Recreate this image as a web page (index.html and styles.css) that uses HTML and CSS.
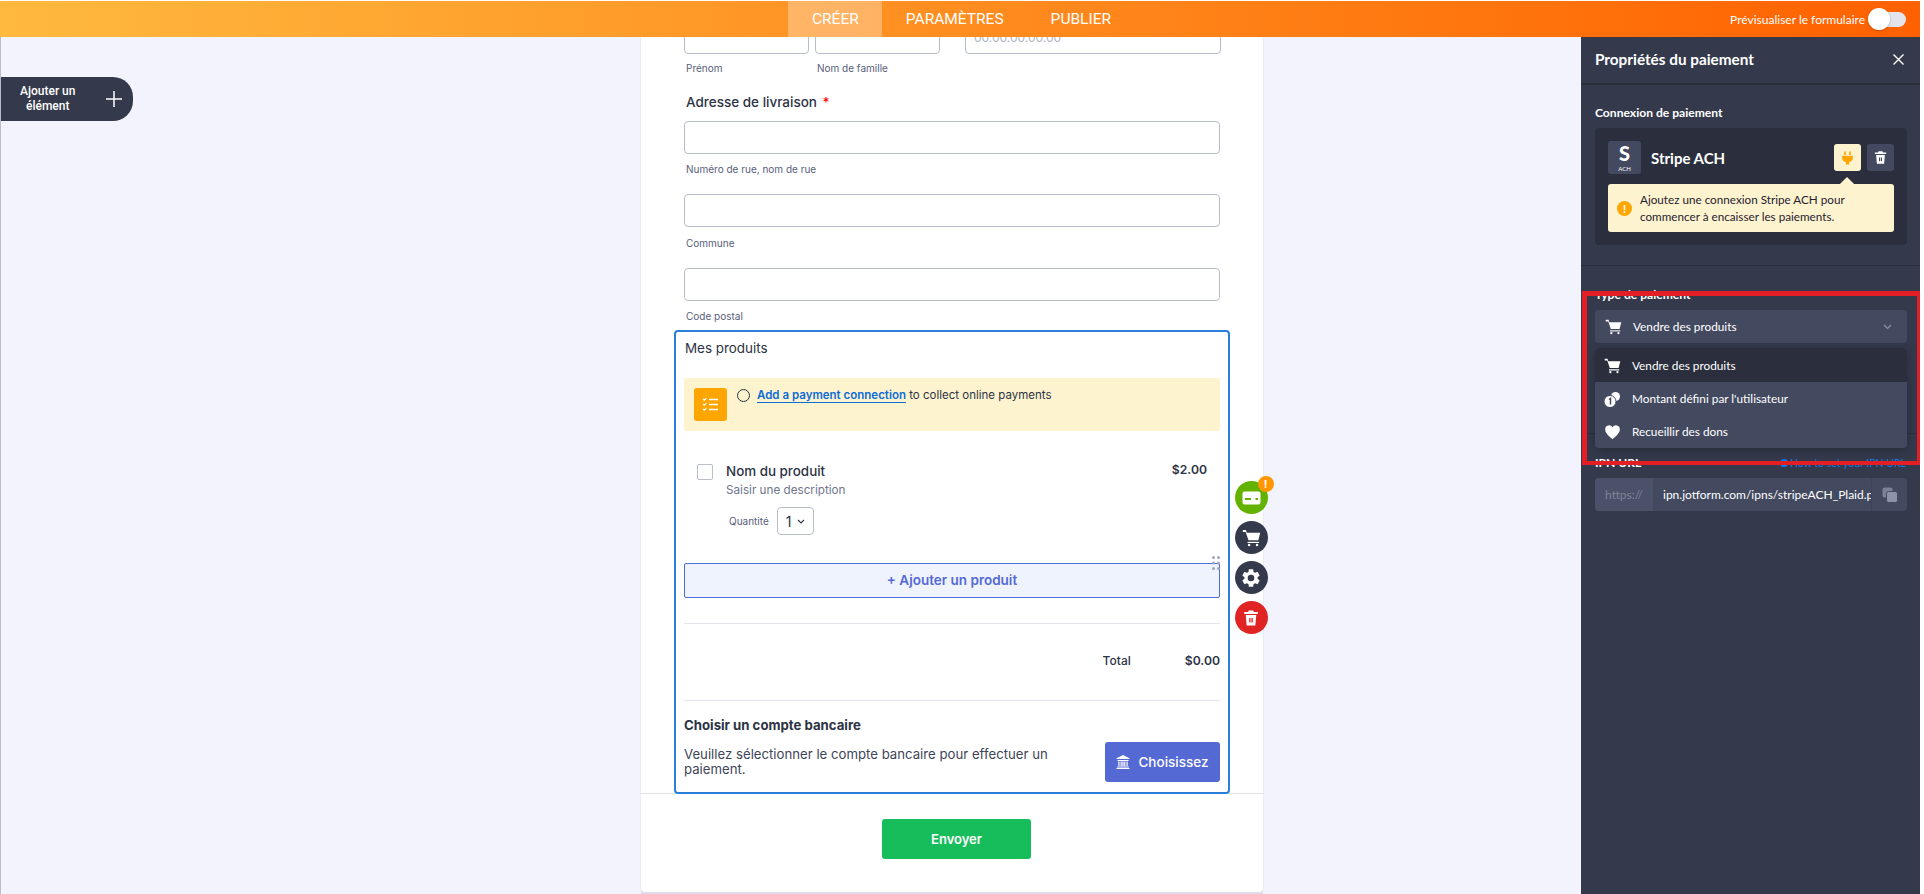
FILE: index.html
```html
<!DOCTYPE html>
<html lang="fr">

<head>
    <title>Propriétés du paiement</title>
    <meta charset="UTF-8">
    <link rel="stylesheet" href="styles.css">
</head>

<body>
    <svg class="sprite" width="0" height="0">
        <symbol id="i-cart" viewBox="0 0 24 24">
            <path d="M1 2.5h4l1 3.5h17l-2.4 9.5H8.2L4.6 5H1z" fill="currentColor" />
            <path d="M7 18.2h14.5" stroke="currentColor" stroke-width="1.5" fill="none" />
            <circle cx="9" cy="21.5" r="1.6" fill="currentColor" />
            <circle cx="19" cy="21.5" r="1.6" fill="currentColor" />
        </symbol>
        <symbol id="i-trash" viewBox="0 0 24 24">
            <path fill-rule="evenodd" fill="currentColor" d="M9 2h6l1 2h5v2.5H3V4h5zM5 8h14l-1.2 14H6.2zM9.6 12v6h1.8v-6zM12.6 12v6h1.8v-6z" />
        </symbol>
    </svg>

    <header class="topbar">
        <div></div>
        <nav class="tabs">
            <a class="tab active" href="#">CRÉER</a>
            <a class="tab" href="#">PARAMÈTRES</a>
            <a class="tab" href="#">PUBLIER</a>
        </nav>
        <div class="preview">
            <span>Prévisualiser le formulaire</span>
            <span class="toggle"><span class="knob"></span></span>
        </div>
    </header>

    <div class="main">
        <div class="canvas">
            <button class="add-element">
                <span>Ajouter un<br>élément</span>
                <svg width="16" height="16" viewBox="0 0 16 16"><path d="M8 0v16M0 8h16" stroke="#fff" stroke-width="1.5" /></svg>
            </button>

            <div class="form">
                <div class="name-row">
                    <div class="name-col">
                        <div class="input"></div>
                        <div class="sublabel">Prénom</div>
                    </div>
                    <div class="name-col">
                        <div class="input"></div>
                        <div class="sublabel">Nom de famille</div>
                    </div>
                    <div class="phone-col">
                        <div class="input phone">00.00.00.00.00</div>
                    </div>
                </div>

                <div class="field-label">Adresse de livraison <span class="star">*</span></div>
                <div class="input addr-first"></div>
                <div class="sublabel">Numéro de rue, nom de rue</div>
                <div class="input addr-second"></div>
                <div class="sublabel commune">Commune</div>
                <div class="input addr-third"></div>
                <div class="sublabel">Code postal</div>

                <div class="product-box">
                    <div class="box-title">Mes produits</div>

                    <div class="notice">
                        <div class="notice-icon">
                            <svg width="17" height="17" viewBox="0 0 17 17" fill="none" stroke="#fff">
                                <path d="M7 3.5h9M7 8.5h9M7 13.5h9" stroke-width="1.6" />
                                <path d="M1 3l1.2 1.2L4.5 2M1 8l1.2 1.2L4.5 7M1 13l1.2 1.2L4.5 12" stroke-width="1.2" />
                            </svg>
                        </div>
                        <span class="notice-ring"></span>
                        <div class="notice-text"><a href="#">Add a payment connection</a> to collect online payments</div>
                    </div>

                    <div class="product">
                        <span class="checkbox"></span>
                        <div class="product-info">
                            <div class="product-name">Nom du produit</div>
                            <div class="product-desc">Saisir une description</div>
                            <div class="qty">
                                <span>Quantité</span>
                                <div class="qty-select">1
                                    <svg width="8" height="5" viewBox="0 0 8 5" fill="none"><path d="M1 1l3 3 3-3" stroke="#343a4c" stroke-width="1.2" /></svg>
                                </div>
                            </div>
                        </div>
                        <div class="price">$2.00</div>
                    </div>

                    <div class="add-product">+ Ajouter un produit
                        <svg class="drag" width="8" height="14" viewBox="0 0 8 14" fill="#9ea4bc">
                            <circle cx="1.5" cy="1.5" r="1.5" /><circle cx="6.5" cy="1.5" r="1.5" />
                            <circle cx="1.5" cy="7" r="1.5" /><circle cx="6.5" cy="7" r="1.5" />
                            <circle cx="1.5" cy="12.5" r="1.5" /><circle cx="6.5" cy="12.5" r="1.5" />
                        </svg>
                    </div>

                    <hr class="rule first">
                    <div class="total">
                        <span>Total</span>
                        <strong>$0.00</strong>
                    </div>
                    <hr class="rule second">

                    <div class="bank-title">Choisir un compte bancaire</div>
                    <div class="bank-row">
                        <p>Veuillez sélectionner le compte bancaire pour effectuer un paiement.</p>
                        <button class="bank-btn">
                            <svg width="14" height="14" viewBox="0 0 14 14" fill="#fff">
                                <path d="M7 0l6.5 3.2V4H.5v-.8zM1.5 5h11v1h-11zM2.3 6.6h1.2v4.4H2.3zM4.6 6.6h1.2v4.4H4.6zM8.2 6.6h1.2v4.4H8.2zM10.5 6.6h1.2v4.4h-1.2zM6.4 6.6h1.2v4.4H6.4zM1.2 11.6h11.6v1H1.2zM.5 13h13v1H.5z" />
                            </svg>
                            Choisissez
                        </button>
                    </div>

                    <div class="actions">
                        <div class="action green">
                            <svg width="19" height="14" viewBox="0 0 19 14">
                                <rect x="0.5" y="0.5" width="18" height="13" rx="2" fill="#fff" />
                                <rect x="3" y="7" width="6" height="2" fill="#63b200" />
                                <rect x="13.5" y="7" width="2.5" height="2" fill="#63b200" />
                            </svg>
                            <span class="badge">!</span>
                        </div>
                        <div class="action dark">
                            <svg width="19" height="19"><use href="#i-cart" /></svg>
                        </div>
                        <div class="action dark">
                            <svg width="22" height="22" viewBox="0 0 24 24" fill="#fff">
                                <path d="M19.14 12.94c.04-.3.06-.61.06-.94 0-.32-.02-.64-.07-.94l2.03-1.58a.49.49 0 0 0 .12-.61l-1.92-3.32a.488.488 0 0 0-.59-.22l-2.39.96c-.5-.38-1.03-.7-1.62-.94l-.36-2.54a.484.484 0 0 0-.48-.41h-3.84c-.24 0-.43.17-.47.41l-.36 2.54c-.59.24-1.13.57-1.62.94l-2.39-.96c-.22-.08-.47 0-.59.22L2.74 8.87c-.12.21-.08.47.12.61l2.03 1.58c-.05.3-.09.63-.09.94s.02.64.07.94l-2.03 1.58a.49.49 0 0 0-.12.61l1.92 3.32c.12.22.37.29.59.22l2.39-.96c.5.38 1.03.7 1.62.94l.36 2.54c.05.24.24.41.48.41h3.84c.24 0 .44-.17.47-.41l.36-2.54c.59-.24 1.13-.56 1.62-.94l2.39.96c.22.08.47 0 .59-.22l1.92-3.32c.12-.22.07-.47-.12-.61l-2.01-1.58zM12 15.6A3.6 3.6 0 1 1 12 8.4a3.6 3.6 0 0 1 0 7.2z" />
                            </svg>
                        </div>
                        <div class="action red">
                            <svg width="18" height="18"><use href="#i-trash" /></svg>
                        </div>
                    </div>
                </div>

                <div class="form-footer">
                    <button class="submit">Envoyer</button>
                </div>
            </div>
        </div>

        <aside class="panel">
            <div class="panel-head">
                <span>Propriétés du paiement</span>
                <svg width="11" height="11" viewBox="0 0 11 11"><path d="M.5.5l10 10M10.5.5l-10 10" stroke="#fff" stroke-width="1.4" /></svg>
            </div>

            <section class="panel-section connection">
                <div class="panel-label">Connexion de paiement</div>
                <div class="conn-card">
                    <div class="conn-head">
                        <div class="conn-logo"><b>S</b><i>ACH</i></div>
                        <div class="conn-name">Stripe ACH</div>
                        <div class="conn-btn plug">
                            <svg width="13" height="14" viewBox="0 0 24 24" fill="#ffa500" preserveAspectRatio="none">
                                <path d="M6 1h3v6H6zM15 1h3v6h-3zM2 8h20v4c0 4-4 6.500-7 7v4H9v-4c-3-.5-7-3-7-7z" />
                            </svg>
                        </div>
                        <div class="conn-btn trash">
                            <svg width="15" height="15"><use href="#i-trash" /></svg>
                        </div>
                    </div>
                    <div class="conn-tip">
                        <span class="warn">!</span>
                        <span>Ajoutez une connexion Stripe ACH pour commencer à encaisser les paiements.</span>
                    </div>
                </div>
            </section>

            <section class="panel-section type">
                <div class="panel-label">Type de paiement</div>
                <div class="select">
                    <svg width="17" height="17"><use href="#i-cart" /></svg>
                    <span>Vendre des produits</span>
                    <svg class="chev" width="9" height="6" viewBox="0 0 9 6" fill="none"><path d="M1 1l3.500 3.500L8 1" stroke="#8b91a6" stroke-width="1.2" /></svg>
                </div>
                <ul class="menu">
                    <li class="selected">
                        <svg width="17" height="17"><use href="#i-cart" /></svg>
                        Vendre des produits
                    </li>
                    <li>
                        <svg width="17" height="16" viewBox="0 0 16 16" fill="#fff">
                            <circle cx="11" cy="5.500" r="4.500" />
                            <circle cx="5.500" cy="10.500" r="6" stroke="#434a60" stroke-width="1" />
                            <path d="M4.500 8.500l1.500-1v6" stroke="#434a60" stroke-width="1.500" fill="none" />
                        </svg>
                        Montant défini par l'utilisateur
                    </li>
                    <li>
                        <svg width="17" height="16" viewBox="0 0 24 24" fill="#fff">
                            <path d="M12 23C5 17 1 13 1 8a6 6 0 0 1 11-3.200A6 6 0 0 1 23 8c0 5-4 9-11 15z" />
                        </svg>
                        Recueillir des dons
                    </li>
                </ul>
            </section>

            <section class="panel-section ipn">
                <div class="ipn-head">
                    <div class="panel-label">IPN URL</div>
                    <a href="#"><span class="info-dot"></span>How to set your IPN URL</a>
                </div>
                <div class="ipn-input">
                    <span class="prefix">https://</span>
                    <span class="ipn-value">ipn.jotform.com/ipns/stripeACH_Plaid.php</span>
                    <span class="copy">
                        <svg width="16" height="16" viewBox="0 0 16 16">
                            <rect x="0.500" y="0.500" width="10" height="10" rx="2" fill="#7b8198" />
                            <rect x="4.500" y="4.500" width="11" height="11" rx="2" fill="#8c92a8" stroke="#434a60" />
                        </svg>
                    </span>
                </div>
            </section>

            <!-- annotation drawn on the screenshot -->
            <div class="highlight"></div>
        </aside>
    </div>
</body>

</html>
```

FILE: styles.css
```css
* {
    box-sizing: border-box;
}

html {
    background-color: #fff;
}

body {
    margin: 0;
    width: 1920px;
    height: 894px;
    overflow: hidden;
    padding-top: 1px;
    background-color: #fff;
    font-family: "Inter", "Liberation Sans", sans-serif;
    color: #2c3345;
}

.sprite {
    position: absolute;
}

button {
    border: none;
    font-family: inherit;
    padding: 0;
}

/* Top bar */
.topbar {
    height: 36px;
    display: grid;
    grid-template-columns: 1fr auto 1fr;
    background: linear-gradient(90deg, #ffb93e 0%, #ff6100 100%);
}

.tabs {
    display: flex;
    margin-left: 3px;
}

.tab {
    display: block;
    padding: 0 23.5px;
    line-height: 36px;
    font-family: "Roboto", sans-serif;
    font-size: 15.5px;
    color: #fff;
    text-decoration: none;
}

.tab.active {
    background-color: rgba(255, 255, 255, 0.3);
}

.preview {
    display: flex;
    align-items: center;
    justify-content: flex-end;
    padding-right: 14px;
    color: #fff;
    font-family: "Lato", sans-serif;
    font-size: 12px;
}

.toggle {
    position: relative;
    display: block;
    width: 38px;
    height: 15px;
    margin-left: 3px;
    border-radius: 8px;
    background-color: #e3e5ec;
}

.knob {
    position: absolute;
    left: 0;
    top: -4px;
    width: 22px;
    height: 22px;
    border-radius: 50%;
    background-color: #fff;
    box-shadow: 0 1px 3px rgba(0, 0, 0, 0.2);
}

/* Builder area */
.main {
    display: flex;
    height: 857px;
}

.canvas {
    flex: 1;
    position: relative;
    overflow: hidden;
    background-color: #f3f3fe;
    border-left: 1px solid #b9bccb;
}

.add-element {
    position: absolute;
    left: -1px;
    top: 40px;
    width: 133px;
    height: 44px;
    display: flex;
    align-items: center;
    padding: 0 11px 0 20px;
    justify-content: space-between;
    background-color: #343a4c;
    color: #fff;
    border-radius: 0 20px 20px 0;
    font-family: "Roboto", sans-serif;
    font-size: 12px;
    font-weight: 500;
    line-height: 15px;
}

/* Form */
.form {
    width: 622px;
    margin: -16px 0 0 640px;
    padding-bottom: 33px;
    background-color: #fff;
    border-radius: 0 0 4px 4px;
    box-shadow: 0 4px 0 #dcdeec, 0 0 0 1px #eaebf7;
}

.name-row {
    display: flex;
    padding-left: 43px;
}

.name-col {
    width: 125px;
    margin-right: 6px;
}

.phone-col {
    width: 256px;
    margin-left: 19px;
}

.input {
    height: 33px;
    width: 536px;
    margin-left: 43px;
    border: 1px solid #b8bdc9;
    border-radius: 4px;
    background-color: #fff;
}

.name-row .input {
    width: 100%;
    margin-left: 0;
}

.phone {
    padding: 0 8px;
    font-size: 12px;
    line-height: 31px;
    color: #b0b4c0;
}

.sublabel {
    margin: 8px 0 0 45px;
    font-size: 10px;
    line-height: 14px;
    color: #57607a;
}

.sublabel.commune {
    margin-top: 9px;
}

.name-row .sublabel {
    margin: 7px 0 0 2px;
}

.field-label {
    margin: 18px 0 0 45px;
    font-size: 13.5px;
    font-weight: 500;
    line-height: 18px;
}

.star {
    margin-left: 2px;
    color: #f00;
}

.addr-first {
    margin-top: 10px;
}

.addr-second {
    margin-top: 18px;
}

.addr-third {
    margin-top: 18px;
}

/* Product box */
.product-box {
    position: relative;
    z-index: 1;
    width: 556px;
    margin: 7px 0 0 33px;
    padding: 7px 8px 10px;
    border: 2px solid #2b7fdc;
    border-radius: 4px;
    background-color: #fff;
}

.box-title {
    margin-left: 1px;
    font-size: 13.4px;
    line-height: 18px;
}

.notice {
    display: flex;
    align-items: flex-start;
    height: 53px;
    margin-top: 21px;
    padding: 10px;
    border-radius: 3px;
    background-color: #fef3cf;
}

.notice-icon {
    width: 33px;
    height: 33px;
    display: flex;
    align-items: center;
    justify-content: center;
    border-radius: 3px;
    background-color: #ffa500;
}

.notice-ring {
    width: 13px;
    height: 13px;
    margin: 1px 7px 0 10px;
    border: 1.5px solid #2c3345;
    border-radius: 50%;
}

.notice-text {
    font-size: 11.5px;
    line-height: 14px;
}

.notice-text a {
    font-weight: 600;
    color: #0a6cd8;
    text-decoration: none;
    border-bottom: 1px solid #0a6cd8;
}

.product {
    display: flex;
    align-items: flex-start;
    margin-top: 31px;
    padding: 0 13px;
}

.checkbox {
    width: 16px;
    height: 16px;
    margin: 2px 13px 0 0;
    border: 1px solid #b8bdc9;
    border-radius: 2px;
}

.product-info {
    flex: 1;
}

.product-name {
    font-size: 13.4px;
    font-weight: 500;
    line-height: 18px;
}

.product-desc {
    margin-top: 2px;
    font-size: 11.7px;
    line-height: 16px;
    color: #6f768d;
}

.qty {
    display: flex;
    align-items: center;
    margin: 9px 0 0 3px;
    font-size: 10px;
    color: #57607a;
}

.qty-select {
    display: flex;
    align-items: center;
    justify-content: space-between;
    width: 37px;
    height: 28px;
    margin-left: 8px;
    padding: 0 8px;
    border: 1px solid #b8bdc9;
    border-radius: 4px;
    font-size: 14px;
    color: #2c3345;
}

.price {
    font-size: 12.2px;
    font-weight: 600;
    line-height: 16px;
}

.add-product {
    position: relative;
    height: 35px;
    margin-top: 28px;
    border: 1px solid #4c6fe0;
    border-radius: 2px;
    background-color: #eff3fe;
    text-align: center;
    font-size: 13.5px;
    font-weight: 600;
    line-height: 33px;
    color: #5469d4;
}

.drag {
    position: absolute;
    right: -1px;
    top: -8px;
}

.rule {
    height: 1px;
    margin: 25px 0 0;
    border: none;
    background-color: #e3e5ec;
}

.rule.second {
    margin-top: 30px;
}

.total {
    display: flex;
    justify-content: flex-end;
    gap: 54px;
    margin-top: 28px;
    font-size: 12px;
    font-weight: 500;
    line-height: 18px;
}

.total strong {
    font-size: 12.2px;
    font-weight: 600;
}

.bank-title {
    margin-top: 15px;
    font-size: 13.2px;
    font-weight: 700;
    line-height: 18px;
}

.bank-row {
    display: flex;
    align-items: center;
    justify-content: space-between;
    margin-top: 8px;
}

.bank-row p {
    width: 385px;
    margin: 0;
    font-size: 13.2px;
    line-height: 15px;
    color: #3e4459;
}

.bank-btn {
    width: 115px;
    height: 40px;
    display: flex;
    align-items: center;
    justify-content: center;
    gap: 8px;
    border-radius: 3px;
    background-color: #5569d4;
    color: #fff;
    font-size: 13.5px;
    font-weight: 500;
}

.form-footer {
    margin-top: -1px;
    padding-top: 25px;
    border-top: 1px solid #e3e5ec;
}

.submit {
    display: block;
    width: 149px;
    height: 40px;
    margin-left: 241px;
    border-radius: 3px;
    background-color: #18bd5b;
    color: #fff;
    font-size: 13px;
    font-weight: 600;
}

/* Round buttons beside the selected field */
.actions {
    position: absolute;
    left: 558.5px;
    top: 149px;
    display: flex;
    flex-direction: column;
    gap: 7px;
}

.action {
    position: relative;
    width: 33px;
    height: 33px;
    display: flex;
    align-items: center;
    justify-content: center;
    border-radius: 50%;
    color: #fff;
}

.action.green {
    background-color: #63b200;
}

.action.dark {
    background-color: #343a4c;
}

.action.red {
    background-color: #e02424;
}

.badge {
    position: absolute;
    right: -6px;
    top: -5px;
    width: 16px;
    height: 16px;
    border-radius: 50%;
    background-color: #ff9800;
    text-align: center;
    font-size: 11px;
    font-weight: 700;
    line-height: 16px;
}

/* Right panel */
.panel {
    position: relative;
    width: 339px;
    background-color: #343a4c;
    color: #fff;
    font-family: "Lato", sans-serif;
}

.panel-head {
    display: flex;
    align-items: center;
    justify-content: space-between;
    height: 48px;
    padding: 0 16px 2px 14px;
    border-bottom: 2px solid #2b2f3d;
    font-size: 15.3px;
    font-weight: 700;
}

.panel-section {
    padding: 20px 13px 0 14px;
    border-bottom: 1px solid #2b2f3d;
}

.panel-label {
    font-size: 12.1px;
    font-weight: 700;
    line-height: 16px;
}

.connection {
    height: 181px;
}

.conn-card {
    margin-top: 7px;
    height: 117px;
    padding: 13px;
    border-radius: 4px;
    background-color: #2b2f3d;
}

.conn-head {
    display: flex;
    align-items: center;
}

.conn-logo {
    width: 33px;
    height: 33px;
    display: flex;
    flex-direction: column;
    align-items: center;
    border-radius: 3px;
    background-color: #434a60;
}

.conn-logo b {
    font-size: 20px;
    font-weight: 900;
    line-height: 23px;
    margin-top: 1px;
}

.conn-logo i {
    font-size: 6px;
    font-style: normal;
    line-height: 7px;
}

.conn-name {
    flex: 1;
    margin-left: 10px;
    font-size: 15px;
    font-weight: 700;
}

.conn-btn {
    width: 27px;
    height: 27px;
    display: flex;
    align-items: center;
    justify-content: center;
    border-radius: 3px;
}

.conn-btn.plug {
    position: relative;
    margin-right: 6px;
    background-color: #fef3cf;
}

.conn-btn.plug::after {
    content: "";
    position: absolute;
    left: 8px;
    top: 35px;
    width: 10px;
    height: 10px;
    background-color: #fef3cf;
    transform: rotate(45deg);
}

.conn-btn.trash {
    background-color: #434a60;
}

.conn-tip {
    position: relative;
    display: flex;
    align-items: center;
    gap: 8px;
    height: 48px;
    margin-top: 10px;
    padding: 0 8px 0 9px;
    border-radius: 3px;
    background-color: #fef3cf;
    color: #1f2230;
    font-size: 11.7px;
    line-height: 17px;
}

.warn {
    flex: none;
    width: 15px;
    height: 15px;
    border-radius: 50%;
    background-color: #ffa500;
    color: #fff;
    text-align: center;
    font-size: 11px;
    font-weight: 900;
    line-height: 15px;
}

.type {
    position: relative;
    height: 168px;
    padding-top: 21px;
}

.select {
    display: flex;
    align-items: center;
    height: 33px;
    margin-top: 7px;
    padding: 0 15px 0 10px;
    border-radius: 4px;
    background-color: #434a60;
    font-size: 11.8px;
}

.select span {
    flex: 1;
    margin-left: 11px;
}

.menu {
    position: absolute;
    left: 14px;
    right: 13px;
    top: 82px;
    margin: 0;
    padding: 0;
    list-style: none;
    overflow: hidden;
    border-radius: 4px;
    background-color: #434a60;
    box-shadow: 0 2px 12px rgba(0, 0, 0, 0.25);
    font-size: 11.8px;
}

.menu li {
    display: flex;
    align-items: center;
    gap: 11px;
    height: 33px;
    padding-left: 9px;
}

.menu li.selected {
    height: 34px;
    background-color: #2b2f3d;
}

.ipn {
    padding-top: 21px;
    border-bottom: none;
}

.ipn-head {
    display: flex;
    justify-content: space-between;
    padding-right: 1px;
}

.ipn-head a {
    display: flex;
    align-items: center;
    gap: 2px;
    font-size: 10.5px;
    line-height: 16px;
    color: #0a7cf0;
    text-decoration: none;
}

.info-dot {
    width: 8px;
    height: 8px;
    border-radius: 50%;
    background-color: #0a7cf0;
}

.ipn-input {
    display: flex;
    height: 33px;
    margin-top: 7px;
    overflow: hidden;
    border-radius: 4px;
    background-color: #434a60;
    font-size: 12px;
    line-height: 33px;
}

.prefix {
    flex: none;
    width: 58px;
    text-align: center;
    background-color: #4a5168;
    color: #7f8599;
}

.ipn-value {
    flex: none;
    width: 208px;
    margin-left: 10px;
    overflow: hidden;
    white-space: nowrap;
}

.copy {
    flex: 1;
    display: flex;
    align-items: center;
    justify-content: center;
    border-left: 1px solid #3d4357;
}

/* Red frame */
.highlight {
    position: absolute;
    left: 1px;
    top: 254px;
    width: 339px;
    height: 174px;
    border: 5px solid #e31e24;
    border-right-width: 4px;
    border-bottom-width: 4px;
}
```
